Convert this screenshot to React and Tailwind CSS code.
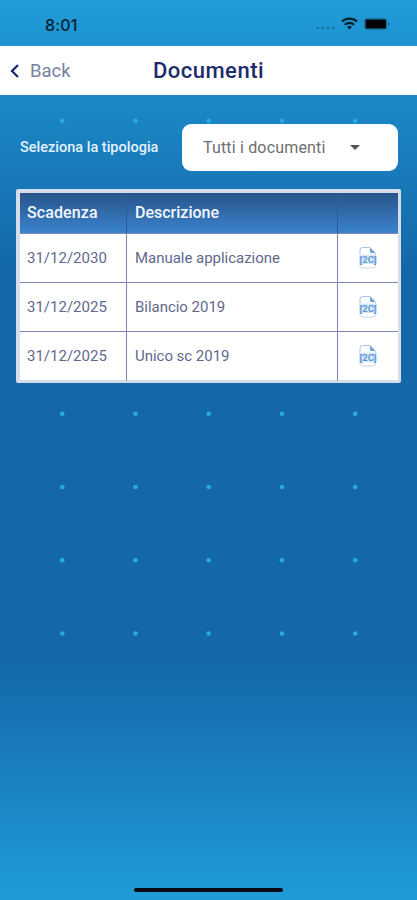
const DOCUMENTS = [
  { id: 1, date: '31/12/2030', description: 'Manuale applicazione' },
  { id: 2, date: '31/12/2025', description: 'Bilancio 2019' },
  { id: 3, date: '31/12/2025', description: 'Unico sc 2019' },
]

const DOT_COLS = [62.3, 135.5, 208.7, 282, 355.2]
const DOT_ROWS = [120.8, 194, 267.3, 340.5, 413.7, 487, 560.2, 633.5]

function DotPattern() {
  return (
    <svg className="absolute inset-0 w-full h-full" viewBox="0 0 417 900" fill="#29abe2" aria-hidden="true">
      {DOT_ROWS.map(y => DOT_COLS.map(x => <circle key={`${x}-${y}`} cx={x} cy={y} r="2.3" />))}
    </svg>
  )
}

function StatusBar() {
  return (
    <div className="h-[46px] pl-[45px] pr-[26px] flex items-center justify-between text-[#06212f]">
      <span className="font-['Inter',sans-serif] font-medium text-[16px] leading-5 tracking-[0.2px] mt-[3px]">8:01</span>
      <svg className="w-[76px] h-[16px] mt-[2px]" viewBox="0 0 76 16" fill="none">
        <g fill="#14648f">
          <circle cx="3" cy="12" r="1.1" />
          <circle cx="8" cy="12" r="1.1" />
          <circle cx="13" cy="12" r="1.1" />
          <circle cx="18" cy="12" r="1.1" />
        </g>
        <g stroke="#06212f" strokeWidth="2.1">
          <path d="M27 5.6a11 11 0 0 1 15 0" />
          <path d="M29.8 8.7a7 7 0 0 1 9.4 0" />
        </g>
        <path d="M34.5 13.5l-2.4-2.5a3.5 3.5 0 0 1 4.8 0z" fill="#06212f" />
        <rect x="49.5" y="2.5" width="22" height="11" rx="2" stroke="#176f9e" />
        <rect x="50.5" y="3.5" width="20.5" height="9" rx="0.8" fill="#000" />
        <path d="M73 5.5v5l2.500-2.500z" fill="#176f9e" />
      </svg>
    </div>
  )
}

function FileIcon() {
  return (
    <svg className="w-[20px] h-[24px] -mt-px" viewBox="0 0 20 24" fill="none">
      <path d="M2 8.5V4a2.5 2.5 0 0 1 2.5-2.5H12L17.5 7.5V9" stroke="#a4c3e6" />
      <path d="M12 1.5V5.5a1.5 1.5 0 0 0 1.5 1.5h4z" fill="#6ba3da" />
      <path d="M2 17.5v2A2.5 2.5 0 0 0 4.5 22H15a2.5 2.5 0 0 0 2.5-2.5v-2" stroke="#c9d7ea" />
      <rect x="1" y="8.5" width="18" height="9.5" rx="1.2" fill="#d9e8f7" />
      <text
        x="10"
        y="16.5"
        textAnchor="middle"
        textLength="17"
        lengthAdjust="spacingAndGlyphs"
        fill="#5d9bd8"
        fontSize="9"
        fontWeight="700"
        fontFamily="Roboto, sans-serif"
      >
        [2C]
      </text>
    </svg>
  )
}

function DocumentsTable({ documents }) {
  return (
    <div className="mx-4 mt-[18px] border-[3px] border-l-4 border-t-4 border-[#d5dcea] rounded-[2px] bg-white text-[15px]">
      <div className="grid grid-cols-[107px_211px_1fr] h-[40px] bg-linear-to-b from-[#28558c] to-[#3b83cd] text-[#f4f8fd] font-medium text-[16px]">
        <div className="border-r border-[#2a5c9c] pl-[7px] leading-[39px] tracking-[0.1px]">Scadenza</div>
        <div className="border-r border-[#2a5c9c] pl-[8px] leading-[39px]">Descrizione</div>
        <div />
      </div>
      {documents.map(doc => (
        <div
          key={doc.id}
          className="grid grid-cols-[107px_211px_1fr] h-[49px] border-t border-[#7f87b0] text-[#5f698d]"
        >
          <div className="border-r border-[#7f87b0] pl-[7px] leading-[49px]">{doc.date}</div>
          <div className="border-r border-[#7f87b0] pl-[8px] leading-[49px] tracking-[-0.03px]">{doc.description}</div>
          <div className="flex items-center justify-center">
            <FileIcon />
          </div>
        </div>
      ))}
    </div>
  )
}

export default function App() {
  return (
    <div className="relative w-[417px] h-[900px] overflow-hidden font-['Roboto',sans-serif] bg-[linear-gradient(to_bottom,#209cd8_0px,#1468a9_265px,#1468a9_660px,#209cd8_900px)]">
      <DotPattern />
      <div className="relative h-full flex flex-col">
        <StatusBar />

        {/* Navigation */}
        <header className="h-[49px] bg-white grid grid-cols-[1fr_auto_1fr] items-center">
          <button className="flex items-center gap-[10px] pl-[10px] pt-[2px] text-[18.5px] text-[#7780a0]">
            <svg className="w-[10px] h-[14px] -mt-[2px]" viewBox="0 0 10 14" fill="none" stroke="#1b2a70" strokeWidth="2.3">
              <path d="M8 1L2 7l6 6" />
            </svg>
            Back
          </button>
          <h1 className="text-[22px] font-medium tracking-[0.5px] text-[#1c2c6c]">Documenti</h1>
        </header>

        {/* Type filter */}
        <div className="mt-[29px] pl-5 pr-[19px] flex items-center justify-between">
          <span className="text-[14.5px] font-medium text-[#e3f1fb]">Seleziona la tipologia</span>
          <button className="w-[216px] h-[47px] rounded-[9px] bg-white pl-[21px] pr-[38px] flex items-center justify-between text-[16px] tracking-[0.17px] text-[#6e6e6e]">
            Tutti i documenti
            <svg className="w-[10px] h-[5px]" viewBox="0 0 10 5" fill="#555">
              <path d="M0 0h10L5 5z" />
            </svg>
          </button>
        </div>

        <DocumentsTable documents={DOCUMENTS} />

        {/* Home indicator */}
        <div className="mt-auto mb-[8px] mx-auto w-[149px] h-[4px] rounded-full bg-[#0a0a14]" />
      </div>
    </div>
  )
}
